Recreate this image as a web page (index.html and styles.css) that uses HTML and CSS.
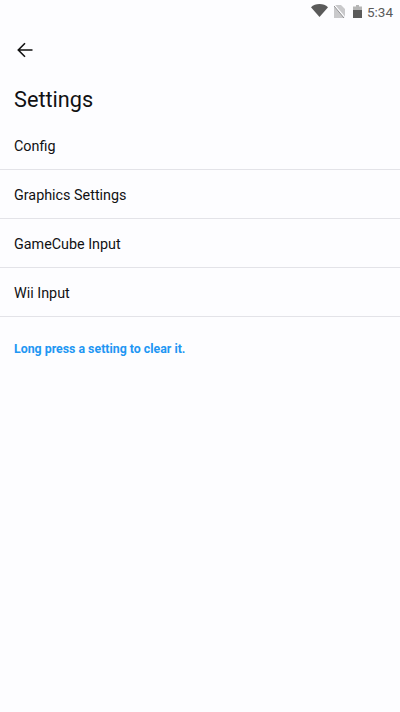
FILE: index.html
```
<!DOCTYPE html>
<html lang="en">
<head>
<meta charset="utf-8">
<title>Settings</title>
<link rel="stylesheet" href="styles.css">
</head>
<body>
<div class="status">
  <svg class="i-wifi" width="17" height="13" viewBox="0 0 17 13"><path d="M0 3.200C2.200 1.200 5.200 0 8.500 0S14.800 1.200 17 3.200L8.500 13z" fill="#5a5a5a"/></svg>
  <svg class="i-sim" width="11" height="13" viewBox="0 0 11 13"><path d="M0 0h7l4 4v9H0z" fill="#c9c9cb"/><path d="M0 0l11 13" stroke="#fdfdff" stroke-width="1.800"/><path d="M0 1l10 12" stroke="#8b8b8d" stroke-width="1"/></svg>
  <svg class="i-bat" width="9" height="13" viewBox="0 0 9 13"><path d="M3 0h3v1.500h3V5H0V1.500h3z" fill="#b5b5b5"/><rect y="5" width="9" height="8" fill="#5a5a5a"/></svg>
  <span class="clock">5:34</span>
</div>
<header class="bar">
  <svg width="16" height="16" viewBox="0 0 16 16"><path d="M15.500 8H1.500M8 1.300L1.300 8L8 14.700" fill="none" stroke="#111" stroke-width="1.600"/></svg>
</header>
<h1 class="title">Settings</h1>
<ul class="list">
  <li class="row">Config</li>
  <li class="row">Graphics Settings</li>
  <li class="row">GameCube Input</li>
  <li class="row">Wii Input</li>
</ul>
<p class="hint">Long press a setting to clear it.</p>
</body>
</html>
```
FILE: styles.css
```
* { box-sizing: border-box; }
html, body { margin: 0; padding: 0; }
body {
  width: 400px;
  height: 712px;
  overflow: hidden;
  background: #fdfdff;
  font-family: Roboto, "Liberation Sans", sans-serif;
  color: #111113;
}
.status {
  height: 24px;
  display: flex;
  align-items: center;
  justify-content: flex-end;
  padding-right: 7px;
  color: #5a5a5a;
}
.i-wifi { margin-right: 6px; margin-top: -3px; }
.i-sim { margin-right: 8px; margin-top: -1px; }
.i-bat { margin-right: 5px; margin-top: -1px; }
.clock { font-size: 13.500px; }
.bar {
  height: 52px;
  display: flex;
  align-items: center;
  padding-left: 17px;
}
.title {
  margin: 0;
  height: 45px;
  padding: 11px 0 0 14px;
  font-size: 21.700px;
  line-height: 26px;
  font-weight: 400;
}
.list { list-style: none; margin: 0; padding: 0; }
.row {
  height: 49px;
  padding: 2px 0 0 14px;
  display: flex;
  align-items: center;
  font-size: 14.350px;
  border-bottom: 1px solid #e3e3e8;
}
.hint {
  margin: 0;
  padding: 25px 0 0 14px;
  font-size: 12.350px;
  line-height: 15px;
  font-weight: 700;
  color: #2196f3;
}
```
